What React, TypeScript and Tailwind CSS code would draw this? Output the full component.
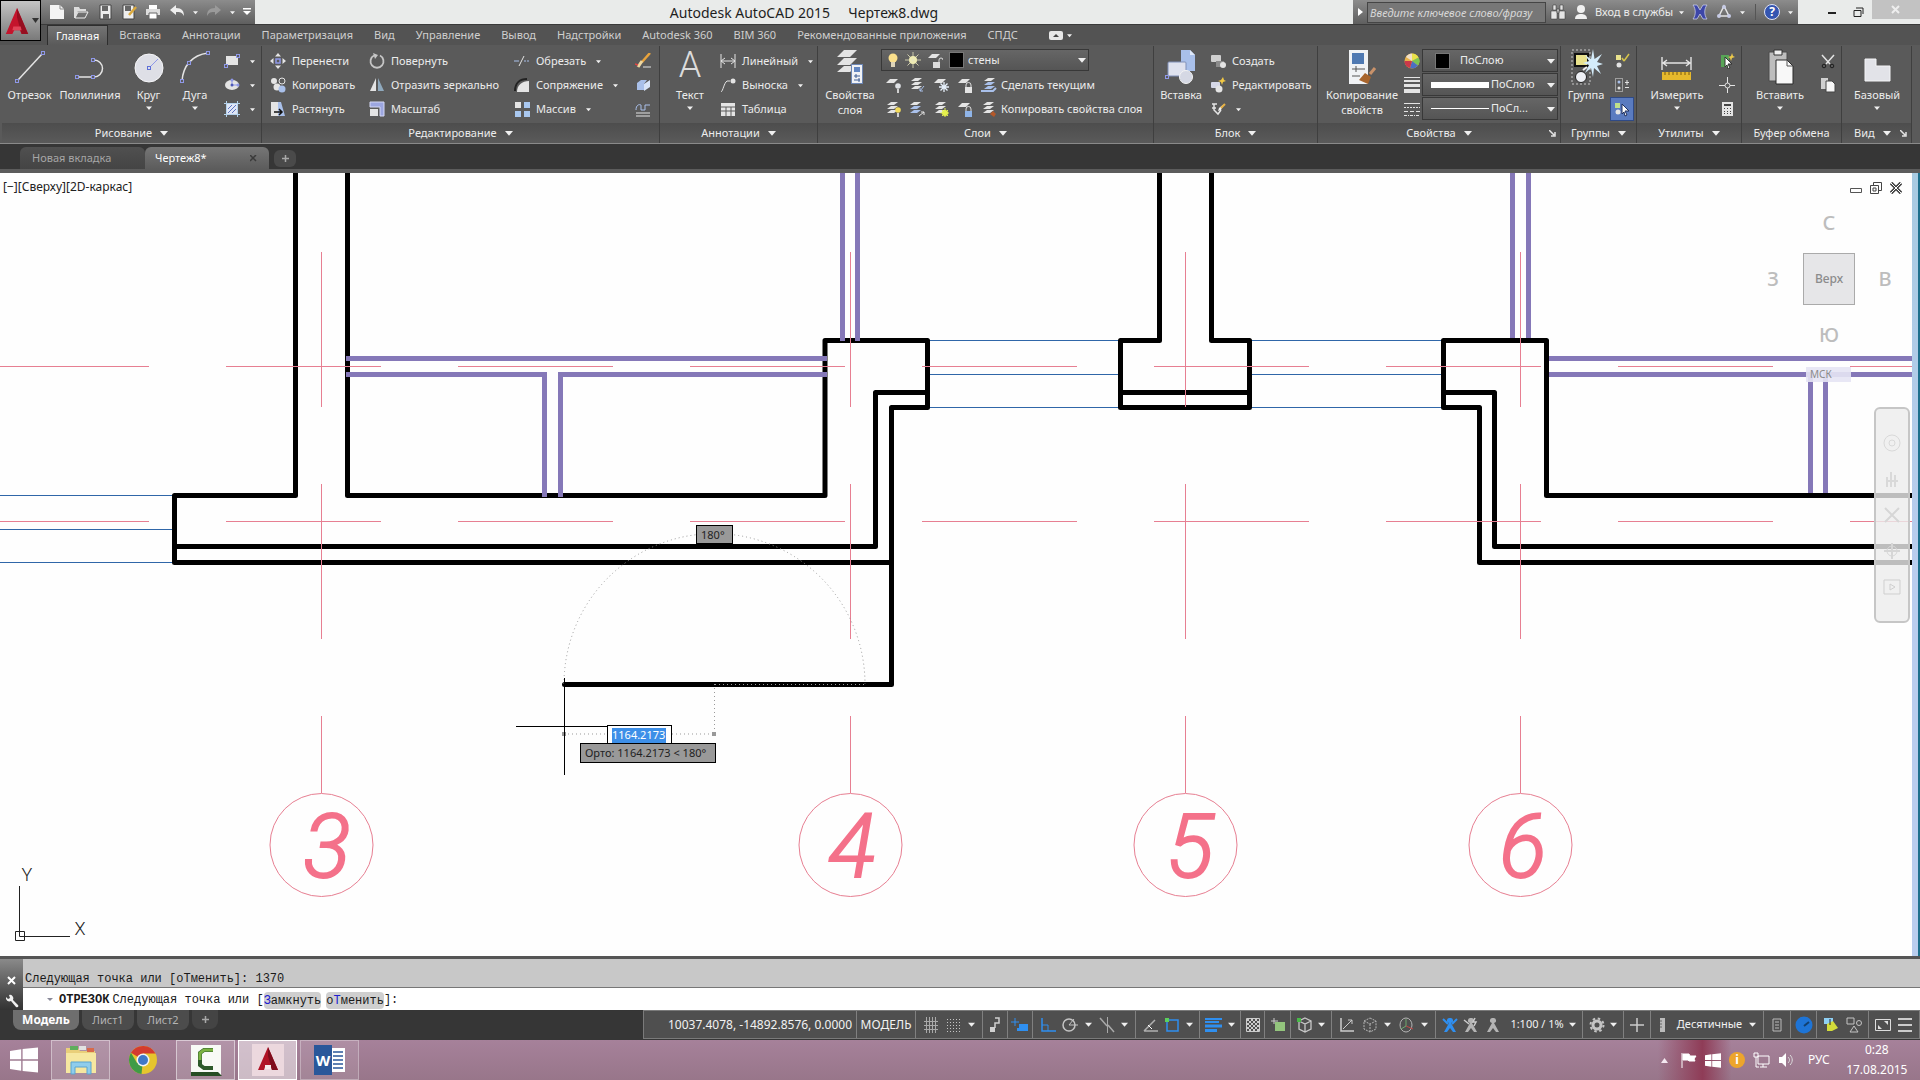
import type {ReactNode} from "react";

const INK = "#e4e4e4";
const NODE = "#8f98e8";
const BLUE = "#a9c0ea";
const AXIS = "#e77f92";
const WALL = "#000000";
const PARTITION = "#8578b8";
const WINDOW = "#2f66a8";

/* ---------- small helpers ---------- */

function Svg({w = 16, h = w, box, children}: {w?: number; h?: number; box?: string; children: ReactNode}) {
  return (
    <svg width={w} height={h} viewBox={box ?? `0 0 ${w} ${h}`} fill="none" className="shrink-0" aria-hidden="true">
      {children}
    </svg>
  );
}

function Caret({size = 6}: {size?: number}) {
  return (
    <svg width={size} height={size} viewBox="0 0 6 6" className="shrink-0" aria-hidden="true">
      <path d="M0 1.500h6L3 5z" fill="#f0f0f0" />
    </svg>
  );
}

function Nodes({points}: {points: number[][]}) {
  return (
    <>
      {points.map(([x, y]) => (
        <rect key={`${x}-${y}`} x={x - 1.5} y={y - 1.5} width="3" height="3" fill="#5c5c5c" stroke={NODE} />
      ))}
    </>
  );
}

function Sheets({fill = INK, dx = 0}: {fill?: string; dx?: number}) {
  return (
    <g transform={`translate(${dx} 0)`}>
      <path d="M5 1h7l-4 3H1z" fill={INK} />
      <path d="M5 5h7l-4 3H1z" fill={fill} />
      <path d="M5 9h7l-4 3H1z" fill={fill} />
    </g>
  );
}

/* ---------- ribbon icons ---------- */

const big = {
  line: (
    <Svg w={34}>
      <path d="M5 30L29 4" stroke={INK} strokeWidth="1.500" />
      <Nodes points={[[4, 31], [30, 3]]} />
    </Svg>
  ),
  polyline: (
    <Svg w={34}>
      <path d="M4 27h17a8.500 8.500 0 0 0 0-17" stroke={INK} strokeWidth="1.500" />
      <Nodes points={[[4, 27], [20, 27], [20, 10]]} />
    </Svg>
  ),
  circle: (
    <Svg w={34}>
      <circle cx="17" cy="18" r="14" fill="#dedfe6" stroke="#f6f6f8" />
      <path d="M17 18l9-9" stroke={NODE} />
      <rect x="15.500" y="16.500" width="3" height="3" fill="#dedfe6" stroke="#5f70d8" />
    </Svg>
  ),
  arc: (
    <Svg w={34}>
      <path d="M4 31C5 16 14 5 30 3" stroke={INK} strokeWidth="1.500" />
      <Nodes points={[[4, 31], [11, 13], [30, 3]]} />
    </Svg>
  ),
  layers: (
    <Svg w={34} h={36}>
      <path d="M11 1h13l-7 7H4zM11 9h13l-7 7H4zM11 17h13l-7 6H4z" fill={INK} />
      <rect x="18.500" y="15.500" width="11" height="19" fill="#f0f2f6" stroke="#6c86b4" />
      <path d="M21 18h6v5h-6z" fill="#6286c2" />
      <path d="M21 27h6M21 31h6M23 25v4M26 29v4" stroke="#3d5c94" />
    </Svg>
  ),
  insert: (
    <Svg w={34} h={36}>
      <path d="M17 1h9l5 5v16H17z" fill={BLUE} />
      <path d="M26 1v5h5" fill="#dfe9fa" />
      <rect x="4" y="13" width="18" height="14" rx="1" fill="#dfe2ee" stroke="#8090b8" />
      <circle cx="22" cy="28" r="6.500" fill="#d5d8e4" stroke="#f4f4f4" />
      <rect x="1.500" y="26.500" width="3" height="3" stroke={NODE} />
    </Svg>
  ),
  match: (
    <Svg w={34} h={36}>
      <rect x="4" y="1" width="19" height="34" fill="#f0f2f5" />
      <rect x="7" y="4" width="12" height="11" fill="#4f79b2" />
      <path d="M7 20h13M7 27h8M11 17v6" stroke="#555" />
      <path d="M30 19l-5 6" stroke="#c9926a" strokeWidth="3" />
      <path d="M20 24l6 4-3 7-9-4z" fill="#a8652d" />
    </Svg>
  ),
  group: (
    <Svg w={34} h={36}>
      <rect x="3" y="1" width="18" height="34" stroke="#c8c8c8" strokeDasharray="2 2" />
      <rect x="6" y="5" width="13" height="12" fill="#e9e28c" stroke="#111" strokeWidth="2" />
      <circle cx="12" cy="28" r="5.500" fill="#eef0f5" stroke="#222" />
      <path d="M14 21l4-3" stroke="#eee" strokeWidth="2" />
      <path d="M24 0l1.500 10L33 5l-5 8 6 2-6 2 4 8-7-6-1 9-2-9-6 5 4-8-6-2 6-2-4-6 6 4z" fill="#d4ecfa" />
    </Svg>
  ),
  measure: (
    <Svg w={34} h={36}>
      <path d="M2 8v13M31 8v13M3 14h27M7 11l-4 3 4 3M26 11l4 3-4 3" stroke={INK} strokeWidth="1.400" />
      <rect x="2" y="23" width="29" height="8" fill="#e6b92c" />
      <path d="M5 23v3M9 23v3M13 23v3M17 23v3M21 23v3M25 23v3M29 23v3" stroke="#7a5b10" />
    </Svg>
  ),
  paste: (
    <Svg w={34} h={36}>
      <path d="M6 3h18v29H6z" fill="#bdbdbd" stroke="#4a4a4a" />
      <path d="M11 1h8v5h-8z" fill="#f0f0f0" stroke="#333" />
      <path d="M13 11h11l6 6v18H13z" fill="#f8f8f8" stroke="#2a2a2a" />
      <path d="M24 11v6h6" stroke="#555" />
    </Svg>
  ),
  base: (
    <Svg w={34} h={36}>
      <path d="M5 10h11v7h14v15H5z" fill="#e2e3e8" stroke="#f4f4f6" />
    </Svg>
  ),
};

const sm = {
  rect: (
    <Svg>
      <rect x="2" y="3" width="12" height="9" fill={INK} />
      <Nodes points={[[2, 13], [14, 3]]} />
    </Svg>
  ),
  ellipse: (
    <Svg>
      <ellipse cx="8" cy="8" rx="7" ry="5" fill={INK} />
      <path d="M8 3v5h6" stroke={NODE} />
      <circle cx="8" cy="3" r="1.500" fill={NODE} />
      <circle cx="8" cy="8" r="1.500" fill="#4d59b8" />
      <circle cx="14" cy="8" r="1.500" fill={NODE} />
    </Svg>
  ),
  hatch: (
    <Svg>
      <rect x="3" y="3" width="10" height="10" fill="#dfe6f6" />
      <path d="M4 12l8-8M4 8l4-4M8 12l4-4" stroke="#5d74c0" />
      <path d="M0 2.500h16M0 13.500h16M2.500 0v16M13.500 0v16" stroke="#b4d2ec" />
    </Svg>
  ),
  move: (
    <Svg>
      <path d="M8 0l3 3.500H5zM8 16l3-3.500H5zM0 8l3.500-3v6zM16 8l-3.500-3v6z" fill={INK} />
      <rect x="6" y="6" width="4" height="4" stroke={NODE} strokeWidth="1.500" />
    </Svg>
  ),
  copy: (
    <Svg>
      <circle cx="4" cy="4" r="3" fill={INK} />
      <circle cx="12" cy="4" r="3" stroke={INK} />
      <circle cx="7" cy="10" r="3.500" fill={INK} />
      <circle cx="12" cy="12" r="3.500" fill={BLUE} />
    </Svg>
  ),
  stretch: (
    <Svg>
      <path d="M1 1h7v14H1z" fill={INK} />
      <path d="M8 1h3l4 14H8z" fill={BLUE} />
      <path d="M4 11h8M9 8l3 3-3 3" stroke="#111" strokeWidth="1.500" />
    </Svg>
  ),
  rotate: (
    <Svg>
      <path d="M5 2.500A6.500 6.500 0 1 0 11 2.500" stroke="#c6c6c6" strokeWidth="1.800" />
      <path d="M4 0l5 2-3 4z" fill="#c6c6c6" />
    </Svg>
  ),
  mirror: (
    <Svg>
      <path d="M7 1v13H1z" fill={INK} />
      <path d="M9 1v13h6z" fill="#8fa9bd" />
    </Svg>
  ),
  scale: (
    <Svg>
      <path d="M1 1h14v14h-4V6H1z" fill="#9ca6e0" stroke="#d4d8f4" />
      <rect x="1" y="8" width="8" height="7" fill={INK} />
    </Svg>
  ),
  trim: (
    <Svg>
      <path d="M0 8h5M10 8h2M13 8h2" stroke={BLUE} />
      <path d="M5 13L10 3" stroke={INK} />
    </Svg>
  ),
  fillet: (
    <Svg>
      <path d="M1 14C1 6 6 2 13 2" stroke="#222" strokeWidth="2" />
      <path d="M3 15C3 8 8 4 15 4v11z" fill={INK} />
    </Svg>
  ),
  array: (
    <Svg>
      <path d="M1 1h6v6H1z" fill={INK} />
      <path d="M10 1h6v6h-6zM1 10h6v6H1zM10 10h6v6h-6z" fill="#a9c8f0" />
    </Svg>
  ),
  erase: (
    <Svg>
      <path d="M15 0L7 9" stroke="#e8a33c" strokeWidth="2.500" />
      <path d="M7 8l-4 6" stroke="#f0d8a0" strokeWidth="3" />
      <path d="M0 11l3 1" stroke="#e04444" strokeWidth="1.500" />
      <path d="M8 14h8" stroke={INK} />
    </Svg>
  ),
  explode: (
    <Svg>
      <path d="M2 6l4-3h6l-3 4v6H2z" fill={BLUE} />
      <path d="M9 7l6-4v7l-6 4z" fill="#d8e4f8" />
    </Svg>
  ),
  offset: (
    <Svg>
      <path d="M1 9c0-5 3-6 5-5v5h4V4h5" stroke={BLUE} />
      <path d="M1 12h14M1 15h14" stroke={INK} />
    </Svg>
  ),
  linear: (
    <Svg>
      <path d="M1 1v14M15 1v14M1 8h14" stroke={INK} />
      <path d="M5 5L1 8l4 3M11 5l4 3-4 3" stroke={INK} />
    </Svg>
  ),
  leader: (
    <Svg>
      <path d="M1 15C3 14 4 6 7 4h3" stroke={INK} />
      <circle cx="13" cy="4" r="2.500" fill={INK} />
    </Svg>
  ),
  table: (
    <Svg>
      <path d="M1 2h14v13H1z" fill={INK} />
      <path d="M1 6h14M1 10h14M6 6v9M11 6v9" stroke="#5c5c5c" />
    </Svg>
  ),
  create: (
    <Svg>
      <rect x="1" y="2" width="10" height="7" rx="1" fill="#cfcfcf" />
      <rect x="6" y="8" width="8" height="6" fill="#8b8b8b" />
      <circle cx="13" cy="12" r="3" fill={INK} />
    </Svg>
  ),
  edit: (
    <Svg>
      <rect x="1" y="5" width="9" height="6" rx="1" fill="#d6d8e6" />
      <circle cx="9" cy="12" r="3.500" fill={INK} />
      <path d="M13 0l1 3 2 1-3 1-1 3-1-3-3-1 3-1z" fill="#f2c844" />
    </Svg>
  ),
  attribute: (
    <Svg>
      <path d="M2 3h5M2 7h4" stroke={INK} strokeWidth="1.500" />
      <path d="M4 3v6l4 4 3-4" stroke={INK} strokeWidth="1.500" />
      <path d="M14 3l-3 6-3 1 1-3z" fill="#f0f0f0" />
      <path d="M15 3l-4 4" stroke="#e5b043" strokeWidth="2" />
    </Svg>
  ),
  wheel: (
    <Svg>
      <circle cx="8" cy="8" r="7.500" fill="#e8b24a" />
      <path d="M8 8V.5A7.500 7.500 0 0 1 14.500 4.500z" fill="#e8e04a" />
      <path d="M8 8l6.500-3.500A7.500 7.500 0 0 1 14 12.500z" fill="#7cc454" />
      <path d="M8 8l6 4.500A7.500 7.500 0 0 1 6 15z" fill="#4a6fc4" />
      <path d="M8 8L6 15A7.500 7.500 0 0 1 .500 8z" fill="#c9384a" />
      <path d="M8 8L2 4A7.500 7.500 0 0 1 8 .500z" fill="#f0dfc8" />
    </Svg>
  ),
  weights: (
    <Svg>
      <path d="M0 .5h16" stroke={INK} />
      <path d="M0 4h16" stroke={INK} strokeWidth="2" />
      <path d="M0 8.500h16" stroke={INK} strokeWidth="3" />
      <path d="M0 14h16" stroke={INK} strokeWidth="4" />
    </Svg>
  ),
  types: (
    <Svg>
      <path d="M0 2.500h16" stroke={INK} />
      <path d="M0 6.500h16" stroke={INK} strokeDasharray="2 1" />
      <path d="M0 10.500h16" stroke={INK} strokeDasharray="4 2" />
      <path d="M0 14.500h16" stroke={INK} strokeDasharray="3 1 1 1" />
    </Svg>
  ),
  ungroup: (
    <Svg>
      <rect x="2" y="2" width="5" height="5" fill="#e9e28c" />
      <circle cx="5" cy="12" r="2.500" fill={INK} />
      <path d="M15 1L10 8M8 5l2 3" stroke="#d6c44a" strokeWidth="1.500" />
    </Svg>
  ),
  groupEdit: (
    <Svg>
      <rect x="1.500" y="1.500" width="7" height="13" stroke={INK} strokeDasharray="1 1" />
      <circle cx="5" cy="5" r="1.500" fill={BLUE} />
      <circle cx="5" cy="11" r="1.500" fill={INK} />
      <path d="M11 5.500h4M13 3v5M11 10.500h4" stroke={INK} />
    </Svg>
  ),
  groupSelect: (
    <Svg>
      <rect x="1" y="2" width="5" height="5" fill="#bfe08a" />
      <circle cx="4" cy="11" r="2.500" fill={INK} />
      <path d="M8 3l7 7h-4l2 4-2 1-1-4-2 2z" fill="#fff" stroke="#20305c" />
    </Svg>
  ),
  quickSelect: (
    <Svg>
      <path d="M2 2h8v12H2z" fill="#58a457" />
      <path d="M6 4l7 7H9l2 4-2 1-1-4-2 2z" fill="#fff" stroke="#333" />
      <path d="M13 0l1 3 2 1-3 1-1 3-1-3-2-1 3-1z" fill="#ecc94b" />
    </Svg>
  ),
  point: (
    <Svg>
      <path d="M8.500 0v16M0 8.500h16" stroke={INK} />
      <circle cx="8.500" cy="8.500" r="2.500" stroke={INK} fill="#5c5c5c" />
    </Svg>
  ),
  calc: (
    <Svg>
      <rect x="3" y="1" width="11" height="14" fill={INK} />
      <path d="M5 3h7v2H5zM5 7h1v1H5zM8 7h1v1H8zM11 7h1v1h-1zM5 10h1v1H5zM8 10h1v1H8zM11 10h1v1h-1zM5 12h1v1H5zM8 12h1v1H8zM11 12h1v1h-1z" fill="#444" />
    </Svg>
  ),
  cut: (
    <Svg>
      <path d="M2 2l8 9M14 2L6 11" stroke={INK} strokeWidth="1.500" />
      <circle cx="4" cy="13" r="1.800" stroke="#1c1c1c" />
      <circle cx="12" cy="13" r="1.800" stroke="#1c1c1c" />
    </Svg>
  ),
  copyClip: (
    <Svg>
      <path d="M1 1h7v11H1z" fill="#d0d0d0" />
      <path d="M6 4h6l3 3v8H6z" fill="#f6f6f6" stroke="#444" />
    </Svg>
  ),
};

// layer tool: sheets with a small mark in the corner
function LayerIcon({mark, flat}: {mark: ReactNode; flat?: boolean}) {
  return (
    <Svg>
      {flat ? <path d="M5 2h8l-4 4H1z" fill={INK} /> : <Sheets dx={1} />}
      {mark}
    </Svg>
  );
}

const bulb = (c: string) => (
  <>
    <circle cx="13" cy="9" r="2.800" fill={c} />
    <path d="M12 12h2v4h-2z" fill="#d0d0d0" />
  </>
);
const flake = <path d="M11 5v10M6 10h10M7.500 6.500l7 7M14.500 6.500l-7 7" stroke="#e6f0fb" strokeWidth="1.300" />;
const lock = (c: string) => (
  <>
    <path d="M9 10V8a2.500 2.500 0 0 1 5 0v2" stroke="#ddd" />
    <rect x="8" y="10" width="7" height="6" fill={c} />
  </>
);

const layerRow1: [string, ReactNode][] = [
  ["Отключить", <LayerIcon flat mark={bulb("#dfe2e6")} />],
  ["Изолировать", <LayerIcon mark={<path d="M15 9l-4 5M11 11v3h3" stroke={BLUE} />} />],
  ["Заморозить", <LayerIcon flat mark={flake} />],
  ["Блокировать", <LayerIcon flat mark={lock("#e4e4e4")} />],
  ["Сделать слой текущим", <Svg><Sheets fill={BLUE} dx={2} /><path d="M0 14h12l3-3" stroke={BLUE} strokeWidth="2" /></Svg>],
];
const layerRow2: [string, ReactNode][] = [
  ["Включить все слои", <LayerIcon mark={bulb("#f4dc5a")} />],
  ["Отключить изоляцию", <Svg><Sheets fill={BLUE} /><path d="M10 15l5-4M12 11h3v3" stroke={INK} /></Svg>],
  ["Разморозить все слои", <LayerIcon mark={<><circle cx="12" cy="12" r="3" fill="#e4f04c" /><path d="M12 7v9M7.500 12H16M9 9l6 6M15 9l-6 6" stroke="#e4f04c" /></>} />],
  ["Разблокировать", <LayerIcon flat mark={lock("#8fb4e8")} />],
  ["Соответствие слоя", <LayerIcon mark={<path d="M12 10l3 3-2 3-4-3z" fill="#b4592a" />} />],
];

/* ---------- ribbon building blocks ---------- */

function Panel({title, width, arrow = true, launcher, children}: {
  title: string; width: string; arrow?: boolean; launcher?: boolean; children: ReactNode;
}) {
  return (
    <section className={`flex shrink-0 flex-col border-r border-[#3f3f3f] ${width}`}>
      <div className="flex h-[78px] pt-[3px]">{children}</div>
      <div className="relative flex h-5 items-center justify-center gap-2 bg-gradient-to-b from-[#4d4d4d] to-[#5a5a5a]">
        <span>{title}</span>
        {arrow && <Caret size={8} />}
        {launcher && (
          <span className="absolute right-1">
            <Svg w={7}><path d="M0 0l5 5M6 2v4H2" stroke={INK} strokeWidth="1.500" /></Svg>
          </span>
        )}
      </div>
    </section>
  );
}

function BigTool({icon, lines, width, arrow}: {icon: ReactNode; lines: string[]; width: string; arrow?: boolean}) {
  return (
    <button type="button" className={`flex shrink-0 flex-col items-center whitespace-nowrap ${width}`}>
      <span className="flex h-9 items-center">{icon}</span>
      {lines.map((line) => (
        <span key={line} className="h-[15px] leading-[20px]">{line}</span>
      ))}
      {arrow && <span className="mt-[5px]"><Caret /></span>}
    </button>
  );
}

function Tool({icon, label, arrow, name}: {icon: ReactNode; label?: string; arrow?: boolean; name?: string}) {
  return (
    <button type="button" aria-label={name} className="flex h-6 items-center gap-[6px] whitespace-nowrap">
      {icon}
      {label && <span>{label}</span>}
      {arrow && <span className="ml-1 flex"><Caret size={5} /></span>}
    </button>
  );
}

function Combo({label, value, lead, className}: {label: string; value: string; lead: ReactNode; className: string}) {
  return (
    <label className={`flex items-center border border-[#383838] bg-gradient-to-b from-[#666] to-[#555] ${className}`}>
      {lead}
      <select aria-label={label} className="min-w-0 flex-1 appearance-none bg-transparent outline-none">
        <option>{value}</option>
      </select>
      <span className="mr-[2px] flex"><Caret size={8} /></span>
    </label>
  );
}

const swatch = <span className="h-4 w-[15px] shrink-0 border border-[#777] bg-black" />;

function Ribbon() {
  return (
    <div className="flex h-[99px] overflow-hidden border-b border-[#8a8a8a] bg-[#5a5a5a] pl-[2px] pt-[1px]">
      <Panel title="Рисование" width="w-[260px]">
        <BigTool icon={big.line} lines={["Отрезок"]} width="ml-[1px] w-[53px]" />
        <BigTool icon={big.polyline} lines={["Полилиния"]} width="w-[68px]" />
        <BigTool icon={big.circle} lines={["Круг"]} width="w-[49px]" arrow />
        <BigTool icon={big.arc} lines={["Дуга"]} width="w-[44px]" arrow />
        <div className="ml-[7px] flex flex-col">
          <Tool icon={sm.rect} name="Прямоугольник" arrow />
          <Tool icon={sm.ellipse} name="Эллипс" arrow />
          <Tool icon={sm.hatch} name="Штриховка" arrow />
        </div>
      </Panel>

      <Panel title="Редактирование" width="w-[398px]">
        <div className="ml-2 flex w-[99px] flex-col">
          <Tool icon={sm.move} label="Перенести" />
          <Tool icon={sm.copy} label="Копировать" />
          <Tool icon={sm.stretch} label="Растянуть" />
        </div>
        <div className="flex w-[145px] flex-col">
          <Tool icon={sm.rotate} label="Повернуть" />
          <Tool icon={sm.mirror} label="Отразить зеркально" />
          <Tool icon={sm.scale} label="Масштаб" />
        </div>
        <div className="flex w-[121px] flex-col">
          <Tool icon={sm.trim} label="Обрезать" arrow />
          <Tool icon={sm.fillet} label="Сопряжение" arrow />
          <Tool icon={sm.array} label="Массив" arrow />
        </div>
        <div className="flex flex-col">
          <Tool icon={sm.erase} name="Стереть" />
          <Tool icon={sm.explode} name="Расчленить" />
          <Tool icon={sm.offset} name="Подобие" />
        </div>
      </Panel>

      <Panel title="Аннотации" width="w-[158px]">
        <BigTool
          icon={<span className="h-9 font-['Roboto',sans-serif] text-[36px] font-light leading-8 text-[#dcdcdc]">A</span>}
          lines={["Текст"]}
          width="ml-1 w-[52px]"
          arrow
        />
        <div className="ml-1 flex flex-col">
          <Tool icon={sm.linear} label="Линейный" arrow />
          <Tool icon={sm.leader} label="Выноска" arrow />
          <Tool icon={sm.table} label="Таблица" />
        </div>
      </Panel>

      <Panel title="Слои" width="w-[336px]">
        <BigTool icon={big.layers} lines={["Свойства", "слоя"]} width="ml-[3px] w-[58px]" />
        <div className="ml-[2px] flex flex-col">
          <Combo
            label="Слой"
            value="стены"
            className="mb-[2px] h-[22px] w-[208px]"
            lead={
              <span className="mr-1 flex items-center gap-[6px] pl-[5px]">
                <Svg w={12} h={16}><circle cx="6" cy="6" r="4.500" fill="#fbe08c" /><path d="M4 10h4v5H4z" fill="#ded4b8" /></Svg>
                <Svg><circle cx="8" cy="8" r="4" fill="#f3efae" /><path d="M8 0v16M0 8h16M2.500 2.500l11 11M13.500 2.500l-11 11" stroke="#e8e6c0" strokeWidth=".8" /></Svg>
                <LayerIcon flat mark={<><path d="M12 10V8a2 2 0 0 1 4 0" stroke="#ddd" /><rect x="6" y="10" width="7" height="6" fill="#ddd" /></>} />
                {swatch}
              </span>
            }
          />
          <div className="flex items-center">
            {layerRow1.map(([name, icon]) => (
              <button key={name} type="button" aria-label={name} className="flex h-6 w-6 items-center justify-center">{icon}</button>
            ))}
            <button type="button" className="whitespace-nowrap">Сделать текущим</button>
          </div>
          <div className="flex items-center">
            {layerRow2.map(([name, icon]) => (
              <button key={name} type="button" aria-label={name} className="flex h-6 w-6 items-center justify-center">{icon}</button>
            ))}
            <button type="button" className="whitespace-nowrap">Копировать свойства слоя</button>
          </div>
        </div>
      </Panel>

      <Panel title="Блок" width="w-[164px]">
        <BigTool icon={big.insert} lines={["Вставка"]} width="w-[54px]" />
        <div className="ml-[2px] flex flex-col">
          <Tool icon={sm.create} label="Создать" />
          <Tool icon={sm.edit} label="Редактировать" />
          <Tool icon={sm.attribute} name="Атрибуты" arrow />
        </div>
      </Panel>

      <Panel title="Свойства" width="w-[243px]" launcher>
        <BigTool icon={big.match} lines={["Копирование", "свойств"]} width="ml-1 w-[80px]" />
        <div className="ml-[2px] flex flex-col">
          <Tool icon={sm.wheel} name="Цвет" />
          <Tool icon={sm.weights} name="Вес линий" />
          <Tool icon={sm.types} name="Тип линий" />
        </div>
        <div className="ml-[2px] flex flex-col gap-[1px]">
          <Combo label="Цвет объекта" value="ПоСлою" className="h-[23px] w-[136px]" lead={<span className="ml-3 mr-[10px] flex">{swatch}</span>} />
          <Combo label="Вес линий" value="ПоСлою" className="h-[23px] w-[136px]" lead={<span className="ml-2 mr-[2px] h-[6px] w-[58px] bg-white" />} />
          <Combo label="Тип линий" value="ПоСл..." className="h-[23px] w-[136px]" lead={<span className="ml-2 mr-[2px] h-px w-[58px] bg-white" />} />
        </div>
      </Panel>

      <Panel title="Группы" width="w-[76px]">
        <BigTool icon={big.group} lines={["Группа"]} width="ml-[1px] w-[48px]" />
        <div className="flex flex-col">
          <button type="button" aria-label="Разгруппировать" className="flex h-6 w-6 items-center justify-center">{sm.ungroup}</button>
          <button type="button" aria-label="Редактировать группу" className="flex h-6 w-6 items-center justify-center">{sm.groupEdit}</button>
          <button type="button" aria-label="Выбор групп" className="flex h-6 w-6 items-center justify-center border border-[#2f4a86] bg-[#5a7bc0]">{sm.groupSelect}</button>
        </div>
      </Panel>

      <Panel title="Утилиты" width="w-[105px]">
        <BigTool icon={big.measure} lines={["Измерить"]} width="ml-[9px] w-[62px]" arrow />
        <div className="ml-[11px] flex flex-col">
          <Tool icon={sm.quickSelect} name="Быстрый выбор" />
          <Tool icon={sm.point} name="Координаты" />
          <Tool icon={sm.calc} name="Калькулятор" />
        </div>
      </Panel>

      <Panel title="Буфер обмена" width="w-[100px]" arrow={false}>
        <BigTool icon={big.paste} lines={["Вставить"]} width="ml-2 w-[60px]" arrow />
        <div className="ml-[10px] flex flex-col">
          <Tool icon={sm.cut} name="Вырезать" />
          <Tool icon={sm.copyClip} name="Копировать в буфер" />
        </div>
      </Panel>

      <section className="flex w-[70px] shrink-0 flex-col border-r border-[#3f3f3f]">
        <div className="flex h-[78px] pt-[3px]">
          <BigTool icon={big.base} lines={["Базовый"]} width="ml-[5px] w-[60px]" arrow />
        </div>
        <div className="flex h-5 items-center justify-between bg-gradient-to-b from-[#4d4d4d] to-[#5a5a5a] pl-3 pr-1">
          <span>Вид</span>
          <Caret size={8} />
          <Svg w={7}><path d="M0 0l5 5M6 2v4H2" stroke={INK} strokeWidth="1.500" /></Svg>
        </div>
      </section>
    </div>
  );
}

/* ---------- title bar ---------- */

function QuickAccess() {
  return (
    <div className="flex w-[214px] items-center gap-[8px] bg-gradient-to-b from-[#8c8c8c] to-[#5f5f5f] pl-2">
      <button type="button" aria-label="Создать"><Svg><path d="M1 1h10l4 4v10H1z" fill="#f4f4f4" /><path d="M11 1v4h4" stroke="#888" /></Svg></button>
      <button type="button" aria-label="Открыть"><Svg><path d="M1 3h5l1 2h6v2H5l-3 7H1z" fill="#ddd" /><path d="M5 8h10l-3 6H2z" stroke="#eee" /></Svg></button>
      <button type="button" aria-label="Сохранить"><Svg><path d="M3 1h11v14H3z" fill="#eee" stroke="#444" /><path d="M5 2h6v5H5zM6 10h6v5H6z" fill="#666" /></Svg></button>
      <button type="button" aria-label="Сохранить как"><Svg><path d="M2 1h11v14H2z" fill="#eee" stroke="#444" /><path d="M4 2h6v5H4z" fill="#666" /><path d="M15 3l-7 8" stroke="#dba93c" strokeWidth="2.500" /></Svg></button>
      <button type="button" aria-label="Печать"><Svg><path d="M4 1h8v4H4z" fill="#fff" /><path d="M1 5h14v6H1z" fill="#ddd" /><path d="M4 9h8v6H4z" fill="#fff" stroke="#666" /></Svg></button>
      <button type="button" aria-label="Отменить" className="flex items-center gap-2"><Svg><path d="M1 6l6-5v3c6 0 8 3 8 8-2-4-4-4-8-4v3z" fill="#eee" /></Svg><Caret size={5} /></button>
      <button type="button" aria-label="Повторить" className="flex items-center gap-2"><Svg><path d="M15 6L9 1v3C3 4 1 7 1 12c2-4 4-4 8-4v3z" fill="#9a9a9a" /></Svg><Caret size={5} /></button>
      <button type="button" aria-label="Настройка панели"><Svg w={8}><path d="M0 0h8v1.500H0zM0 3h8L4 7z" fill="#fff" /></Svg></button>
    </div>
  );
}

function TitleBar() {
  return (
    <header className="flex h-6 bg-[#e9ebea] pl-[41px]">
      <QuickAccess />
      <h1 className="flex-1 whitespace-pre text-center text-[14px] leading-[25px] text-[#1e1e1e]">{"Autodesk AutoCAD 2015     Чертеж8.dwg"}</h1>
      <div className="flex w-[445px] items-center bg-gradient-to-b from-[#8c8c8c] to-[#5f5f5f]">
        <span className="flex w-[14px] shrink-0 justify-center"><Svg w={5} h={8}><path d="M0 0l5 4-5 4z" fill="#fff" /></Svg></span>
        <input
          aria-label="Поиск"
          placeholder="Введите ключевое слово/фразу"
          className="h-[21px] w-[179px] shrink-0 border border-[#454545] bg-[#777] px-[2px] text-[11px] italic outline-none placeholder:text-[#d8d8d8]"
        />
        <button type="button" aria-label="Найти" className="ml-1"><Svg><path d="M3 1h3v5H3zM10 1h3v5h-3zM1 7h6v8H1zM9 7h6v8H9zM7 5h2v4H7z" fill={INK} stroke="#333" strokeWidth=".5" /></Svg></button>
        <button type="button" className="ml-[7px] flex shrink-0 items-center gap-[6px] whitespace-nowrap">
          <Svg><circle cx="8" cy="5" r="4" fill="#f0f0f0" /><path d="M2 15c0-4 3-5 6-5s6 1 6 5z" fill="#f0f0f0" /></Svg>
          <span>Вход в службы</span>
          <Caret size={5} />
        </button>
        <button type="button" aria-label="Exchange" className="ml-2"><Svg><path d="M1 1h4l3 5 3-5h4c-3 4-3 10 0 14h-4l-3-5-3 5H1c3-4 3-10 0-14z" fill="#3d46a8" stroke="#d4d8f4" strokeWidth=".7" /></Svg></button>
        <button type="button" aria-label="Autodesk 360" className="ml-2 flex items-center gap-2"><Svg><path d="M8 2l5 10H3z" stroke={INK} strokeWidth="1.500" /><circle cx="8" cy="3" r="2" fill="#c7cbe6" /><circle cx="3" cy="12" r="2" fill="#c7cbe6" /><circle cx="13" cy="12" r="2" fill="#c7cbe6" /></Svg><Caret size={5} /></button>
        <span className="ml-[10px] h-4 w-px bg-[#555]" />
        <button type="button" aria-label="Справка" className="ml-2 flex items-center gap-2">
          <span className="flex h-4 w-4 items-center justify-center rounded-full border border-[#dfe4f6] bg-[#3455b0] text-[12px] font-bold leading-4 text-white">?</span>
          <Caret size={5} />
        </button>
      </div>
      <div className="flex w-[122px] items-center text-[#222]">
        <button type="button" aria-label="Свернуть" className="ml-[29px]"><Svg w={10}><path d="M1 6h8" stroke="#222" strokeWidth="2" /></Svg></button>
        <button type="button" aria-label="Свернуть в окно" className="ml-4"><Svg w={11}><path d="M1 3.500h7v6H1zM3 1h7v6" stroke="#222" /></Svg></button>
        <button type="button" aria-label="Закрыть" className="ml-2 flex h-[19px] flex-1 items-center justify-center self-start bg-[#c2c2c2]"><Svg w={10}><path d="M1 1l7 7M8 1L1 8" stroke="#eee" strokeWidth="2" /></Svg></button>
      </div>
    </header>
  );
}

const ribbonTabs = [
  "Главная", "Вставка", "Аннотации", "Параметризация", "Вид", "Управление", "Вывод",
  "Надстройки", "Autodesk 360", "BIM 360", "Рекомендованные приложения", "СПДС",
];

function RibbonTabs() {
  return (
    <nav className="flex h-[21px] items-end gap-px border-t border-[#3a3a3a] bg-[#535353] pl-[47px]">
      {ribbonTabs.map((tab, i) => (
        <button
          key={tab}
          type="button"
          className={
            i === 0
              ? "h-5 border border-b-0 border-[#2e2e2e] bg-gradient-to-b from-[#747474] to-[#5a5a5a] px-2 leading-[18px] text-white"
              : "h-5 whitespace-nowrap px-[10px] leading-[20px] text-[#cfcfcf]"
          }
        >
          {tab}
        </button>
      ))}
      <button type="button" aria-label="Свернуть ленту" className="ml-5 flex h-5 items-center gap-1">
        <Svg w={14} h={9}><rect width="14" height="9" rx="2" fill="#e8e8e8" /><path d="M4 6h6L7 3z" fill="#444" /></Svg>
        <Caret size={5} />
      </button>
    </nav>
  );
}

function DocTabs() {
  return (
    <div className="flex h-[29px] items-end border-b-4 border-[#5c5c5c] bg-[#363636] pl-5">
      <button type="button" className="h-[22px] w-[125px] rounded-t-md bg-gradient-to-b from-[#505050] to-[#444] pl-3 pt-px text-left text-[#a6a6a6]">Новая вкладка</button>
      <div className="flex h-[22px] w-[124px] items-center rounded-t-md bg-gradient-to-b from-[#767676] to-[#5c5c5c] pl-[10px] pr-3 pt-px">
        <button type="button" className="flex-1 text-left text-white">Чертеж8*</button>
        <button type="button" aria-label="Закрыть чертеж"><Svg w={7}><path d="M0 0l6 6M6 0L0 6" stroke="#3a3a3a" strokeWidth="1.500" /></Svg></button>
      </div>
      <button type="button" aria-label="Новый чертеж" className="mb-[2px] ml-[5px] flex h-[17px] w-[22px] items-center justify-center rounded-md bg-[#4a4a4a]">
        <Svg w={7}><path d="M3.500 0v7M0 3.500h7" stroke="#a8a8a8" strokeWidth="1.500" /></Svg>
      </button>
    </div>
  );
}

/* ---------- drawing area ---------- */

const axes = [
  {x: 321, label: "3", tx: 327},
  {x: 850, label: "4", tx: 852},
  {x: 1185, label: "5", tx: 1190},
  {x: 1520, label: "6", tx: 1523},
];

function Plan() {
  return (
    <svg className="absolute inset-0 h-full w-full" fill="none" aria-label="План этажа">
      <g transform="translate(0 -173)">
        {/* windows */}
        <g stroke={WINDOW} shapeRendering="crispEdges">
          {[340, 374, 407].map((y) => (
            <path key={y} d={`M928 ${y}H1120M1250 ${y}H1443`} />
          ))}
          {[495, 529, 562].map((y) => (
            <path key={y} d={`M0 ${y}H175`} />
          ))}
        </g>

        {/* load-bearing walls */}
        <g stroke={WALL} strokeWidth="5" strokeLinejoin="round" strokeLinecap="round">
          <path d="M295.500 160V495.500H174.500V562.500H891.500V407.500H927.500V340.500H825V495.500H347.500V160" />
          <path d="M174.500 546.500H875.500V392.500H927.500" />
          <path d="M891.500 562.500V684.500H564.500" />
          <path d="M1159.500 160V340.500H1120.500V407.500H1249.500V340.500H1211.500V160M1120.500 392.500H1249.500" />
          <path d="M1930 495.500H1546.500V340.500H1443.500V407.500H1479.500V562.500H1930" />
          <path d="M1443.500 392.500H1494.500V546.500H1930" />
        </g>

        {/* partitions */}
        <g stroke={PARTITION} strokeWidth="5">
          <path d="M842.500 160V341M857.500 160V341M1512.500 160V338M1528.500 160V338" />
          <path d="M346 358.500H827M346 374.500H544.500V497M827 374.500H560.500V497" />
          <path d="M1549 358.500H1930M1549 374.500H1810.500V493M1930 374.500H1825.500V493" />
        </g>

        {/* construction axes */}
        <g stroke={AXIS} shapeRendering="crispEdges">
          <path d="M-6 366H1930M-6 521H1930" strokeDasharray="155 77" />
          {axes.map((a) => (
            <path key={a.label} d={`M${a.x} 252V793`} strokeDasharray="155 77" />
          ))}
        </g>
        {axes.map((a) => (
          <g key={a.label}>
            <circle cx={a.x + 0.5} cy="845" r="51.500" stroke={AXIS} />
            <text x={a.tx} y="877" textAnchor="middle" fill="#f4718a" className="font-['Roboto',sans-serif] text-[88px] font-light italic" stroke="#f4718a" strokeWidth="2">
              {a.label}
            </text>
          </g>
        ))}

        {/* rubber band and cursor */}
        <path d="M564 684A150.500 150.500 0 0 1 865 684M714.500 684V734M564 734H714M715 684.500H865" stroke="#999" strokeDasharray="1 3" />
        <path d="M562 732h4v4h-4zM712 732h4v4h-4z" fill="#999" />
        <path d="M564.500 678V775M516 726.500H607" stroke="#000" />

        {/* UCS icon */}
        <path d="M19.500 886V936.500H70M15.500 931.500h9v9h-9z" stroke="#222" />
        <text x="27" y="881" textAnchor="middle" fill="#222" className="font-['Roboto',sans-serif] text-[18px] font-light">Y</text>
        <text x="80" y="935" textAnchor="middle" fill="#222" className="font-['Roboto',sans-serif] text-[18px] font-light">X</text>
      </g>
    </svg>
  );
}

function ViewCube() {
  return (
    <div className="absolute right-[17px] top-9 grid w-[132px] grid-cols-[20px_1fr_20px] items-center justify-items-center text-[20px] font-medium leading-7 text-[#bdbdbd]">
      <span className="col-span-3">С</span>
      <span>З</span>
      <span className="my-4 flex h-[52px] w-[52px] items-center justify-center border border-[#aaa] bg-[#e6e6e8] text-[12px] text-[#8c8c8c]">Верх</span>
      <span>В</span>
      <span className="col-span-3">Ю</span>
    </div>
  );
}

function NavBar() {
  return (
    <div className="absolute right-[2px] top-[234px] flex h-[216px] w-9 flex-col items-center justify-around rounded-md border-2 border-[#c6c6c6] bg-[#ececec]/80 py-4">
      <Svg w={20}><circle cx="10" cy="10" r="8" stroke="#d9d9d9" /><circle cx="10" cy="10" r="3" stroke="#d9d9d9" /></Svg>
      <Svg w={20}><path d="M5 18V8M9 18V3M13 18V6M4 12h12" stroke="#d9d9d9" strokeWidth="2" /></Svg>
      <Svg w={20}><path d="M3 3l14 14M17 3L3 17" stroke="#d6d6d6" strokeWidth="2" /></Svg>
      <Svg w={20}><path d="M10 2v16M2 10h16" stroke="#d6d6d6" strokeWidth="2" /><circle cx="10" cy="10" r="5" stroke="#d6d6d6" /></Svg>
      <Svg w={20}><path d="M2 3h16v14H2zM8 7l5 3-5 3z" stroke="#cfcfcf" /></Svg>
    </div>
  );
}

function DrawingArea() {
  return (
    <main className="flex min-h-0 flex-1">
      <div className="relative flex-1 overflow-hidden bg-[#fefefe] text-[#222]">
        <Plan />
        <p className="absolute left-[3px] top-[5px] text-[12px]">[−][Сверху][2D-каркас]</p>
        <div className="absolute right-[10px] top-[9px] flex items-center gap-2">
          <button type="button" aria-label="Свернуть чертеж"><Svg w={12}><path d="M.5 6.500h11v4H.5z" stroke="#555" /></Svg></button>
          <button type="button" aria-label="Развернуть чертеж"><Svg w={12}><path d="M.5 3.500h8v8h-8zM3.500 3V.5h8v8H9M3 6h3v3H3z" stroke="#444" /></Svg></button>
          <button type="button" aria-label="Закрыть чертеж"><Svg w={12}><path d="M1 1l10 10M11 1L1 11" stroke="#444" strokeWidth="3.500" /><path d="M1 1l10 10M11 1L1 11" stroke="#fff" /></Svg></button>
        </div>
        <ViewCube />
        <span className="absolute right-[61px] top-[194px] h-[15px] w-[45px] bg-[#e6e4f4]/90 pl-1 text-[10px] leading-[15px] text-[#8a8a8a]">МСК</span>
        <NavBar />

        {/* dynamic input */}
        <span className="absolute left-[696px] top-[352px] h-[19px] w-[37px] border border-black bg-[#999] pl-1 text-[11px] leading-[17px]">180°</span>
        <label className="absolute left-[607px] top-[552px] flex h-5 w-[65px] items-center border border-black bg-white pl-1 text-[11px]">
          <input aria-label="Длина" defaultValue="1164.2173" className="h-[15px] w-[54px] bg-[#3d8fe8] text-white outline-none" />
        </label>
        <span className="absolute left-[580px] top-[570px] h-5 w-[136px] whitespace-nowrap border border-black bg-[#999] pl-1 text-[11px] leading-[18px]">Орто: 1164.2173 &lt; 180°</span>
      </div>
      <div className="w-2 border-r-2 border-[#1d6f8c] bg-gradient-to-b from-[#a8cbe2] via-[#b9cdee] to-[#b9cdee]" />
    </main>
  );
}

/* ---------- command line ---------- */

function CommandLine() {
  return (
    <section className="flex h-[54px] shrink-0 border-t-[3px] border-[#555] font-['Liberation_Mono',monospace] text-[12px] text-[#1a1a1a]">
      <div className="flex w-[23px] flex-col items-center justify-end gap-[9px] bg-gradient-to-b from-[#8a8a8a] to-[#333] pb-[2px]">
        <button type="button" aria-label="Закрыть"><Svg w={9}><path d="M1 1l7 7M8 1L1 8" stroke="#fff" strokeWidth="2" /></Svg></button>
        <button type="button" aria-label="Адаптация"><Svg w={14}><path d="M1 3a3.500 3.500 0 0 0 5 4l5 6c2 1 3-1 2-2L8 6a3.500 3.500 0 0 0-4-5l1 3-2 1z" fill="#f0f0f0" /></Svg></button>
      </div>
      <div className="flex min-w-0 flex-1 flex-col">
        <p className="h-[29px] border-b border-[#777] bg-[#c8c8c8] pl-[2px] pt-[11px] leading-[18px]">Следующая точка или [оТменить]: 1370</p>
        <div className="flex flex-1 items-center whitespace-pre bg-white pl-[24px] pt-[2px]">
          <Svg w={12} h={6}><path d="M0 1h6L3 4z" fill="#8a8a9a" /></Svg>
          <span className="font-bold">ОТРЕЗОК</span>
          <label htmlFor="command" className="ml-[3px]">{"Следующая точка или ["}</label>
          <button type="button" className="h-[17px] rounded-sm bg-[#cfcfcf]"><span className="text-[#2020d0]">З</span>амкнуть</button>
          <button type="button" className="ml-[5px] h-[17px] rounded-sm bg-[#cfcfcf]">о<span className="text-[#2020d0]">Т</span>менить</button>
          <span>]:</span>
          <input id="command" className="min-w-0 flex-1 bg-transparent outline-none" />
        </div>
      </div>
    </section>
  );
}

/* ---------- status bar ---------- */

const GREY = "#a9a9a9";
const ON = "#2f8ff0";
const cube = "M8 1l6 3v8l-6 3-6-3V4zM2 4l6 3 6-3M8 7v8";
const man = "M8 1a2.500 2.500 0 0 1 1 5l5 9h-3l-3-4-3 4H2l5-9a2.500 2.500 0 0 1 1-5z";

const st = {
  grid: <Svg><path d="M3.500 0v16M6.500 0v16M9.500 0v16M12.500 0v16M1 4.500h14M1 8.500h14M1 12.500h14" stroke={GREY} /></Svg>,
  snap: <Svg><path d="M1 2.500h14M1 5.500h14M1 8.500h14M1 11.500h14M1 14.500h14" stroke="#c4c4c4" strokeDasharray="1 2" /></Svg>,
  infer: <Svg><path d="M8 1h4v5H8v5" stroke="#d0d0d0" strokeWidth="1.500" /><path d="M3 10h5v5H3z" fill="#d0d0d0" /></Svg>,
  dyn: <Svg w={18} h={16}><path d="M0 5h8M4 1v8" stroke={ON} /><path d="M8 7h9v7H6v-3h2z" fill={ON} /></Svg>,
  ortho: <Svg><path d="M2 1v13h14" stroke={ON} strokeWidth="1.500" /><path d="M2 8h6v6" stroke={ON} /></Svg>,
  polar: <Svg><circle cx="7" cy="8" r="6" stroke="#c4c4c4" strokeWidth="1.500" /><path d="M7 8h9M7 8l5-6" stroke="#c4c4c4" /></Svg>,
  iso: <Svg><path d="M1 1l7 8M15 15L9 8" stroke={GREY} strokeWidth="1.500" /><path d="M8.500 0v16" stroke={GREY} /></Svg>,
  track: <Svg><path d="M2 14h14M2 14L13 3" stroke="#b0b0b0" strokeWidth="1.500" /><path d="M6 8l4 4" stroke="#fff" /></Svg>,
  osnap: <Svg><path d="M3 3h11v11H3z" stroke={ON} strokeWidth="1.500" /><rect x="1" y="1" width="4" height="4" fill="#5bd05b" /></Svg>,
  weight: <Svg w={18} h={16}><path d="M0 2h17M0 5h14" stroke={ON} strokeWidth="2" /><path d="M0 9h17M0 13.500h12" stroke={ON} strokeWidth="3" /></Svg>,
  transp: (
    <Svg>
      <path d="M1.500 1.500h13v13h-13z" stroke="#ccc" />
      <path d="M2 3h12M2 7h12M2 11h12" stroke="#ccc" strokeDasharray="2 2" strokeWidth="2" />
      <path d="M4 5h10M4 9h10M4 13h10" stroke="#ccc" strokeDasharray="2 2" strokeWidth="2" />
    </Svg>
  ),
  cycle: <Svg><path d="M5 5h10v9H5z" fill="#93c47d" /><path d="M1 4h7M4 1v6" stroke="#ccc" /></Svg>,
  snap3d: <Svg><path d={cube} stroke="#c8c8c8" strokeWidth="1.300" /><rect x="0" y="1" width="4" height="4" fill="#47b947" /></Svg>,
  ucs: <Svg><path d="M2 1v13h13" stroke="#ccc" strokeWidth="1.500" /><path d="M4 12l9-9M13 7V3H9" stroke="#ccc" /></Svg>,
  cube: <Svg><path d={cube} stroke="#b4b4b4" strokeDasharray="2 1" /></Svg>,
  gizmo: <Svg><ellipse cx="8" cy="8" rx="6" ry="7" stroke="#b4b4b4" /><path d="M8 2v7l-5 3" stroke="#6fa86f" /><path d="M8 9l7 3" stroke="#c04848" /></Svg>,
  ann1: <Svg><path d={man} fill={ON} /><path d="M1 2l5 5M15 2l-5 5" stroke={ON} strokeWidth="2" /></Svg>,
  ann2: <Svg><path d={man} fill="#b4b4b4" /><path d="M1 3l5 4M12 1l-2 4h3l-2 4" stroke="#ccc" strokeWidth="1.500" /></Svg>,
  ann3: <Svg><path d={man} fill="#b4b4b4" /></Svg>,
  gear: <Svg><circle cx="8" cy="8" r="4" stroke="#c4c4c4" strokeWidth="3" /><circle cx="8" cy="8" r="6.500" stroke="#c4c4c4" strokeWidth="2" strokeDasharray="2.500 2.600" /></Svg>,
  plus: <Svg><path d="M8 1v14M1 8h14" stroke="#ccc" strokeWidth="1.500" /></Svg>,
  ruler: <Svg w={8} h={16}><path d="M2 1h5v14H2z" fill="#bbb" /><path d="M2 4h2M2 7h2M2 10h2" stroke="#666" /></Svg>,
  props: <Svg w={12} h={14}><path d="M2 1h8v12H2zM4 4h4M4 7h4M4 10h4" stroke="#bbb" /></Svg>,
  perf: <Svg w={18}><circle cx="9" cy="9" r="8.500" fill="#1e74d6" /><path d="M9 10l5-4" stroke="#12406f" strokeWidth="2" /></Svg>,
  isolate: <Svg><path d="M1 1h9v6H1z" fill="#8fd0f4" /><path d="M4 7l6-3 5 7-6 3H4z" fill="#d3dc3a" /><path d="M7 2v6" stroke="#223" /></Svg>,
  shapes: <Svg><path d="M1 1h7v6H1zM8 9l4 6H4z" stroke="#c4c4c4" /><circle cx="13" cy="6" r="2.500" stroke="#c4c4c4" /></Svg>,
  full: <Svg><path d="M.5 2.500h15v11H.5z" stroke="#ddd" /><path d="M9 4h4v4zM3 8v4h4z" fill="#ddd" /></Svg>,
  menu: <Svg><path d="M1 2h14M1 8h14M1 14h14" stroke="#ccc" strokeWidth="2" /></Svg>,
};

const c = <Caret size={7} />;

const statusGroups: {name: string; width: string; items: ReactNode[]}[] = [
  {name: "Сетка и привязка", width: "w-[67px]", items: [st.grid, st.snap, c]},
  {name: "Зависимости", width: "w-[25px]", items: [st.infer]},
  {name: "Динамический ввод", width: "w-[25px]", items: [st.dyn]},
  {name: "Режимы черчения", width: "w-[103px]", items: [st.ortho, st.polar, c, st.iso, c]},
  {name: "Объектная привязка", width: "w-[64px]", items: [st.track, st.osnap, c]},
  {name: "Вес линий", width: "w-[41px]", items: [st.weight, c]},
  {name: "Прозрачность", width: "w-[24px]", items: [st.transp]},
  {name: "Циклический выбор", width: "w-[26px]", items: [st.cycle]},
  {name: "3D привязка", width: "w-[41px]", items: [st.snap3d, c]},
  {name: "ПСК", width: "w-[104px]", items: [st.ucs, st.cube, c, st.gizmo, c]},
  {name: "Масштаб аннотаций", width: "w-[147px]", items: [st.ann1, st.ann2, st.ann3, <span className="ml-1 text-[11px]">1:100 / 1%</span>, c]},
  {name: "Рабочее пространство", width: "w-[41px]", items: [st.gear, c]},
  {name: "Монитор аннотаций", width: "w-[27px]", items: [st.plus]},
  {name: "Единицы", width: "w-[113px]", items: [st.ruler, <span className="ml-1 text-[11px]">Десятичные</span>, c]},
  {name: "Быстрые свойства", width: "w-[27px]", items: [st.props]},
  {name: "Производительность", width: "w-[26px]", items: [st.perf]},
  {name: "Изоляция объектов", width: "w-[52px]", items: [st.isolate, st.shapes]},
  {name: "Полный экран", width: "w-[51px]", items: [st.full, st.menu]},
];

function StatusBar() {
  return (
    <footer className="flex h-[30px] shrink-0 justify-between bg-[#363636]">
      <div className="flex items-start pl-[13px]">
        <button type="button" className="h-[20px] w-[66px] rounded-b-lg bg-[#6e6e6e] text-[12px] font-bold leading-[20px] text-white">Модель</button>
        <button type="button" className="ml-[3px] h-[20px] w-[52px] rounded-b-lg bg-[#4c4c4c] leading-[20px] text-[#b4b4b4]">Лист1</button>
        <button type="button" className="ml-[3px] h-[20px] w-[52px] rounded-b-lg bg-[#4c4c4c] leading-[20px] text-[#b4b4b4]">Лист2</button>
        <button type="button" aria-label="Новый лист" className="ml-[3px] flex h-[19px] w-[26px] items-center justify-center rounded-b-lg bg-[#444]">
          <Svg w={7}><path d="M3.500 0v7M0 3.500h7" stroke="#a8a8a8" strokeWidth="1.500" /></Svg>
        </button>
      </div>
      <div className="flex h-[29px] border border-[#7a7a7a] bg-[#4f4f4f] text-[12px] text-[#f2f2f2]">
        <span className="w-[212px] whitespace-nowrap pr-1 text-right leading-[27px]">10037.4078, -14892.8576, 0.0000</span>
        <button type="button" className="w-[59px] border-l border-[#808080]">МОДЕЛЬ</button>
        {statusGroups.map((g) => (
          <button
            key={g.name}
            type="button"
            aria-label={g.name}
            className={`flex shrink-0 items-center justify-evenly whitespace-nowrap border-l border-[#808080] ${g.width}`}
          >
            {g.items.map((item, i) => (
              <span key={i} className="flex">{item}</span>
            ))}
          </button>
        ))}
      </div>
    </footer>
  );
}

/* ---------- taskbar ---------- */

const winLogo = "M0 2.500l8-1.200v7.200H0zM9 1.200L20 0v8.500H9zM0 9.500h8v7.200l-8-1.200zM9 9.500h11V18L9 16.800z";

const apps: {name: string; frame: string; icon: ReactNode}[] = [
  {
    name: "Проводник",
    frame: "w-[59px] border border-white/40 bg-white/15",
    icon: (
      <Svg w={32} h={30}>
        <path d="M1 3h12l2 3h15v22H1z" fill="#e9cf7a" />
        <path d="M5 1h8v4H5z" fill="#5fae5c" /><path d="M14 1h7v4h-7z" fill="#e2e2e2" /><path d="M22 3h7v4h-7z" fill="#d86a4a" />
        <path d="M1 8h30v20H1z" fill="#f6e7a0" />
        <path d="M6 17h20v12h-4v-7H10v7H6z" fill="#8fcdec" stroke="#5ba4d0" />
      </Svg>
    ),
  },
  {
    name: "Chrome",
    frame: "w-[60px]",
    icon: (
      <Svg w={30}>
        <circle cx="15" cy="15" r="14" fill="#e6c52e" />
        <path d="M15 15L3 7.800A14 14 0 0 1 27.500 8.500H15z" fill="#d43b2f" />
        <path d="M15 15l-1.500 14A14 14 0 0 1 3 7.800L9 18z" fill="#3f9b46" />
        <circle cx="15" cy="15" r="6.500" fill="#f4f4f4" />
        <circle cx="15" cy="15" r="5" fill="#3f78c8" />
      </Svg>
    ),
  },
  {
    name: "Camtasia",
    frame: "w-[59px] border border-white/50 bg-white/15",
    icon: (
      <Svg w={32} h={32}>
        <path d="M1 1h30v30H1z" fill="#f8faf6" />
        <path d="M23 6h-9l-4 3v12l4 3h9" stroke="#2d5a2b" strokeWidth="4" />
        <path d="M23 6h-9l-4 3v7" stroke="#7cb342" strokeWidth="3" />
        <path d="M1 28h27l4 4H1z" fill="#274d24" />
      </Svg>
    ),
  },
  {
    name: "AutoCAD",
    frame: "w-[59px] border border-white bg-white/50",
    icon: (
      <Svg w={32} h={32}>
        <path d="M0 0h32v32H0z" fill="#ecd8de" />
        <path d="M16 3l10 23h-6l-1-3h-6l-1 3H6z" fill="#b01225" />
        <path d="M16 3l10 23h-6L16 12z" fill="#7e0c1c" />
        <path d="M13 21h6v4h-6z" fill="#f4eaea" />
      </Svg>
    ),
  },
  {
    name: "Word",
    frame: "w-[59px] border border-white/30 bg-white/10",
    icon: (
      <span className="flex items-center">
        <span className="flex h-[30px] w-[18px] items-center justify-center bg-[#2a579a] text-[15px] font-bold text-white">W</span>
        <Svg w={13} h={24}><path d="M0 0h13v24H0z" fill="#fff" /><path d="M1 4h10M1 8h10M1 12h10M1 16h10M1 20h10" stroke="#2a579a" strokeWidth="1.500" /></Svg>
      </span>
    ),
  },
];

function Taskbar() {
  return (
    <div className="flex h-10 shrink-0 items-stretch justify-between bg-gradient-to-b from-[#a6819a] to-[#98768a] text-[12px] text-white">
      <div className="flex items-stretch">
        <button type="button" aria-label="Пуск" className="flex w-[51px] items-center pl-[10px]">
          <Svg w={28} h={26} box="0 0 20 18"><path d={winLogo} fill="#fff" /></Svg>
        </button>
        {apps.map((app) => (
          <button key={app.name} type="button" aria-label={app.name} className={`mr-[3px] flex items-center justify-center ${app.frame}`}>
            {app.icon}
          </button>
        ))}
      </div>
      <div className="flex w-[262px] items-center bg-gradient-to-r from-transparent via-[#8f3c57] via-17% to-transparent to-28%">
        <button type="button" aria-label="Скрытые значки" className="ml-[3px]"><Svg w={7} h={5}><path d="M0 5h7L3.500 0z" fill="#f4e8f0" /></Svg></button>
        <div className="ml-3 flex items-center gap-2">
          <Svg w={17}><path d="M2 1v15M3 2h6l1 2h6l-2 3 1 2H9L8 8H3z" fill="#fff" stroke="#fff" /></Svg>
          <Svg w={16} h={15} box="0 0 20 18"><path d={winLogo} fill="#fff" /></Svg>
          <span className="flex h-4 w-4 items-center justify-center rounded-full bg-[#eda52c] text-[12px] font-bold leading-4">i</span>
          <Svg w={17}><path d="M5 4h11v8H5zM7 15h7M10 12v3M1 1h4v4H1zM3 5v10h3" stroke="#fff" /></Svg>
          <Svg w={15} h={16}><path d="M1 5h3l4-4v14l-4-4H1z" fill="#fff" /><path d="M10 5c2 2 2 4 0 6M12 3c3 3 3 7 0 10" stroke="#ddd" /></Svg>
        </div>
        <span className="ml-[15px]">РУС</span>
        <time className="ml-4 flex flex-1 flex-col items-center pr-3 leading-[20px]">
          <span>0:28</span>
          <span>17.08.2015</span>
        </time>
      </div>
    </div>
  );
}

export default function App() {
  return (
    <div className="relative flex h-screen flex-col overflow-hidden bg-[#363636] font-['Noto_Sans','Open_Sans',sans-serif] text-[11px] text-[#ececec]">
      <TitleBar />
      <RibbonTabs />
      <Ribbon />
      <DocTabs />
      <DrawingArea />
      <CommandLine />
      <StatusBar />
      <Taskbar />

      {/* application menu button, spans the title bar and the tab row */}
      <button type="button" aria-label="Меню приложения" className="absolute left-0 top-0 flex h-[41px] w-[41px] items-center gap-[3px] border border-black bg-gradient-to-b from-[#c4c4c4] to-[#7a7a7a] pl-1">
        <Svg w={24} h={26} box="0 0 24 28">
          <path d="M12 0l12 28h-7l-2-4H9l-2 4H0z" fill="#c4142c" />
          <path d="M12 0l12 28h-7L12 10z" fill="#960e20" />
          <path d="M8 20h8l1 4H7z" fill="#e04458" />
        </Svg>
        <Svg w={7} h={5}><path d="M0 0h7L3.500 5z" fill="#333" /></Svg>
      </button>
    </div>
  );
}
